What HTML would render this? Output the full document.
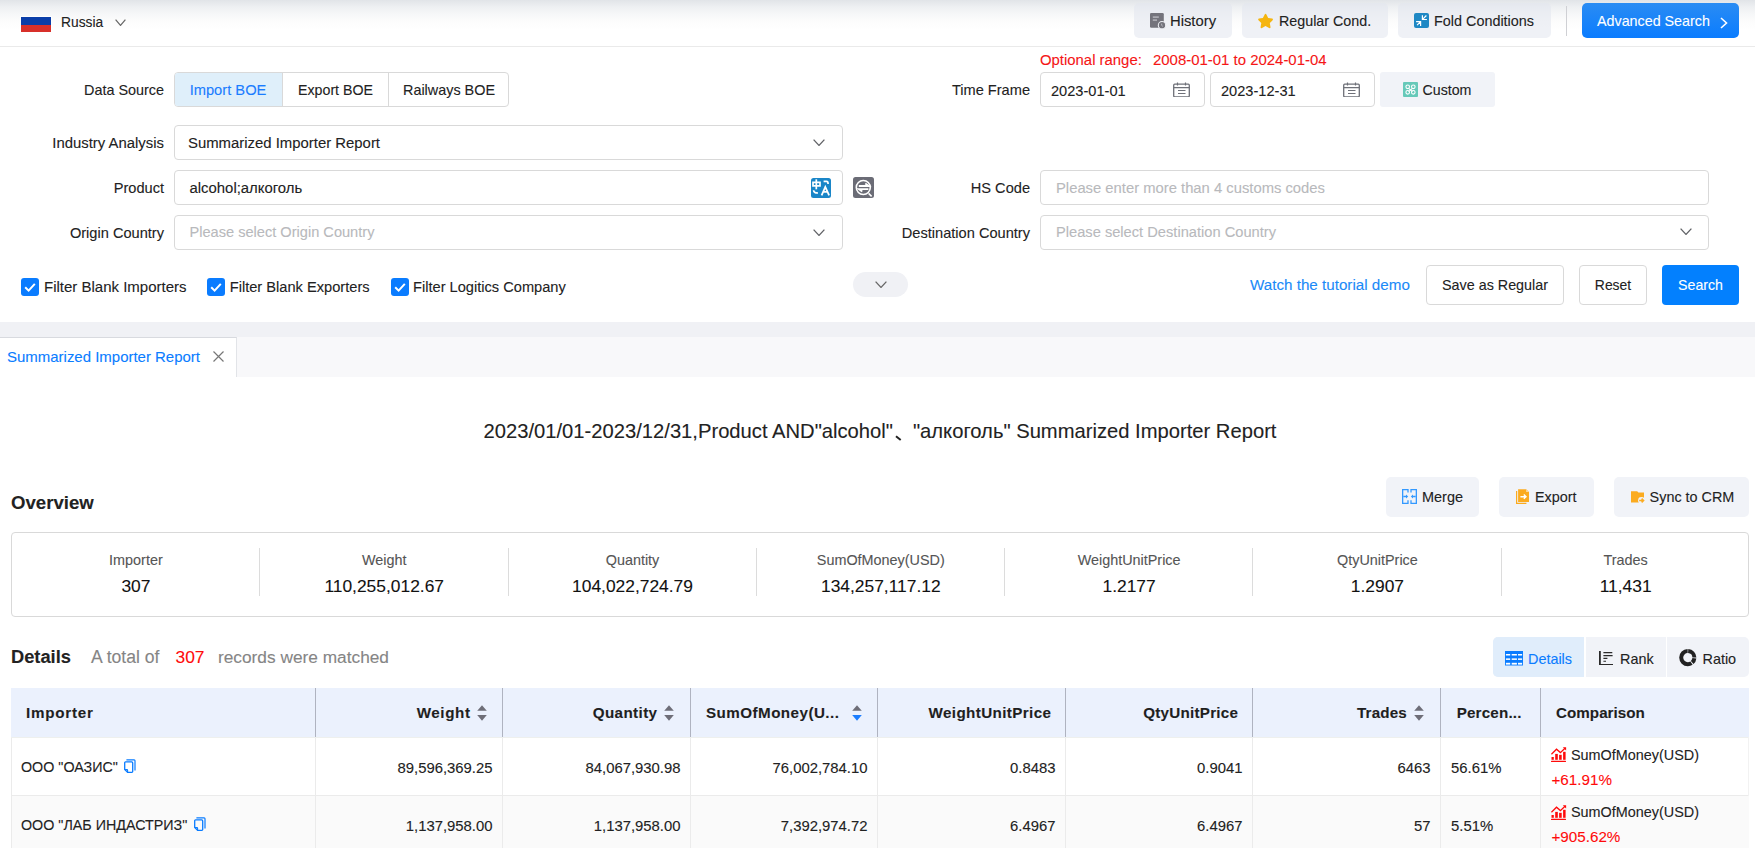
<!DOCTYPE html>
<html><head><meta charset="utf-8"><title>Report</title>
<style>
html,body{margin:0;padding:0;}
body{width:1755px;height:848px;position:relative;overflow:hidden;background:#fff;font-family:"Liberation Sans",sans-serif;}
.t{position:absolute;white-space:nowrap;line-height:1;-webkit-text-stroke:0.1px currentColor;}
.b{position:absolute;display:block;}
.dun{display:inline-block;width:20px;height:0;position:relative;}
.dun:after{content:"";position:absolute;left:2.5px;top:-0.8px;width:5.6px;height:1.5px;background:#222;transform:rotate(38deg);}
</style></head><body>
<div class="b" style="left:0px;top:0px;width:1755px;height:46px;background:linear-gradient(#e1e4e8 0px,#eef0f2 7px,#f6f7f8 14px,#fcfcfc 21px,#fff 30px);"></div>
<div class="b" style="left:0px;top:46px;width:1755px;height:1px;background:#eaeaea;"></div>
<div class="b" style="left:20px;top:16px;width:32px;height:17px;background:rgba(255,255,255,0.8);"></div>
<div class="b" style="left:21px;top:17px;width:30px;height:7.5px;background:#0a3ea8;"></div>
<div class="b" style="left:21px;top:24.5px;width:30px;height:7.5px;background:#d8302a;"></div>
<div class="t" style="top:16.32px;font-size:13.8px;color:#222;left:61px;">Russia</div>
<svg class="b" style="left:115px;top:19px" width="11" height="7" viewBox="0 0 11 7"><polyline points="0.6,0.6 5.5,6.4 10.4,0.6" fill="none" stroke="#666" stroke-width="1.2"/></svg>
<div class="b" style="left:1134px;top:3px;width:98px;height:35px;background:rgba(225,229,238,0.55);border-radius:5px;"></div>
<div class="b" style="left:1242px;top:3px;width:146px;height:35px;background:rgba(225,229,238,0.55);border-radius:5px;"></div>
<div class="b" style="left:1398px;top:3px;width:153px;height:35px;background:rgba(225,229,238,0.55);border-radius:5px;"></div>
<div class="b" style="left:1566px;top:6px;width:1px;height:30px;background:#cfd0d4;"></div>
<div class="b" style="left:1582px;top:3px;width:157px;height:35px;background:linear-gradient(#2a8cf3,#0a7cff);border-radius:5px;"></div>
<svg class="b" style="left:1150px;top:13px" width="16" height="16" viewBox="0 0 16 16"><rect x="0" y="0" width="13.8" height="14.8" rx="1.3" fill="#74747c"/><rect x="2.8" y="3.4" width="6" height="1.4" fill="#b8b8c0"/><rect x="2.8" y="6.4" width="4.2" height="1.4" fill="#b8b8c0"/><circle cx="12" cy="12.2" r="3.7" fill="#74747c" stroke="#eceef3" stroke-width="1.1"/><path d="M11.7 10.6v1.8l1.2 1" stroke="#c8c8d0" stroke-width="0.8" fill="none"/></svg>
<div class="t" style="top:14.47px;font-size:14.8px;color:#222;left:1170px;">History</div>
<svg class="b" style="left:1258px;top:12.5px" width="16" height="16" viewBox="0 0 16 16"><path d="M7.5 0.8c.4 0 .7.2.9.6l1.8 3.6 3.9.6c.8.1 1.1 1.1.5 1.7l-2.8 2.8.7 3.9c.1.8-.7 1.4-1.4 1l-3.6-1.9-3.5 1.9c-.7.4-1.5-.2-1.4-1l.7-3.9L.5 7.3c-.6-.6-.3-1.6.5-1.7l3.9-.6 1.8-3.6c.2-.4.5-.6.8-.6z" fill="#f5b50f"/></svg>
<div class="t" style="top:13.90px;font-size:14.3px;color:#222;left:1279px;">Regular Cond.</div>
<svg class="b" style="left:1414px;top:13px" width="15" height="15" viewBox="0 0 15 15"><rect width="15" height="15" rx="2" fill="#1f88c4"/><path d="M8.4 2.2v4.3h4.5M9 5.9l3.4-3.4M2.1 8.6h4.5v4.4M6.1 9.1l-3 3" fill="none" stroke="#fff" stroke-width="1.2"/></svg>
<div class="t" style="top:13.81px;font-size:14.4px;color:#222;left:1434px;">Fold Conditions</div>
<div class="t" style="top:13.90px;font-size:14.3px;color:#fff;left:1597px;">Advanced Search</div>
<svg class="b" style="left:1719.5px;top:16.5px" width="8" height="12" viewBox="0 0 8 12"><polyline points="1,1 6.5,6 1,11" fill="none" stroke="#fff" stroke-width="1.6"/></svg>
<div class="t" style="top:82.81px;font-size:14.4px;color:#222;right:1591px;">Data Source</div>
<div class="b" style="left:174px;top:72px;width:335px;height:35px;border:1px solid #d9d9d9;border-radius:4px;box-sizing:border-box;background:#fff;"></div>
<div class="b" style="left:175px;top:73px;width:107px;height:33px;background:#dfeffa;border-radius:3px 0 0 3px;"></div>
<div class="b" style="left:282px;top:72px;width:1px;height:35px;background:#d9d9d9;"></div>
<div class="b" style="left:388px;top:72px;width:1px;height:35px;background:#d9d9d9;"></div>
<div class="t" style="top:82.56px;font-size:14.7px;color:#1a7dff;left:228px;transform:translateX(-50%);">Import BOE</div>
<div class="t" style="top:82.98px;font-size:14.2px;color:#222;left:335.5px;transform:translateX(-50%);">Export BOE</div>
<div class="t" style="top:82.81px;font-size:14.4px;color:#222;left:449px;transform:translateX(-50%);">Railways BOE</div>
<div class="t" style="top:82.64px;font-size:14.6px;color:#222;right:725px;">Time Frame</div>
<div class="t" style="top:52.89px;font-size:14.9px;color:#f51616;left:1040px;">Optional range:</div>
<div class="t" style="top:52.84px;font-size:14.95px;color:#f51616;left:1153px;">2008-01-01 to 2024-01-04</div>
<div class="b" style="left:1040px;top:72px;width:165px;height:35px;border:1px solid #d9d9d9;border-radius:4px;box-sizing:border-box;background:#fff;"></div>
<div class="b" style="left:1210px;top:72px;width:165px;height:35px;border:1px solid #d9d9d9;border-radius:4px;box-sizing:border-box;background:#fff;"></div>
<div class="t" style="top:84.14px;font-size:14.6px;color:#222;left:1051px;">2023-01-01</div>
<div class="t" style="top:84.14px;font-size:14.6px;color:#222;left:1221px;">2023-12-31</div>
<svg class="b" style="left:1173px;top:82px" width="17" height="15" viewBox="0 0 17 15"><rect x="0.7" y="2.2" width="15.6" height="12.6" rx="1" fill="none" stroke="#6e7078" stroke-width="1.3"/><path d="M0.7 5.6h15.6M4.5 0.5v3M12.5 0.5v3M5 8.5h7.5M5 11.5h7.5" stroke="#6e7078" stroke-width="1.2"/></svg>
<svg class="b" style="left:1343px;top:82px" width="17" height="15" viewBox="0 0 17 15"><rect x="0.7" y="2.2" width="15.6" height="12.6" rx="1" fill="none" stroke="#6e7078" stroke-width="1.3"/><path d="M0.7 5.6h15.6M4.5 0.5v3M12.5 0.5v3M5 8.5h7.5M5 11.5h7.5" stroke="#6e7078" stroke-width="1.2"/></svg>
<div class="b" style="left:1380px;top:72px;width:115px;height:35px;background:#f1f3f8;border-radius:3px;"></div>
<svg class="b" style="left:1403px;top:82px" width="15" height="15" viewBox="0 0 15 15"><rect width="15" height="15" rx="1" fill="#66c9b9"/><g fill="none" stroke="#fff" stroke-width="1.1"><circle cx="4.7" cy="4.8" r="1.8"/><circle cx="10.3" cy="4.8" r="1.8"/><circle cx="4.7" cy="10.3" r="1.8"/><circle cx="10.3" cy="10.3" r="1.8"/><path d="M5.6 6.3l3.8 3.3M9.4 6.3l-3.8 3.3"/></g></svg>
<div class="t" style="top:83.48px;font-size:14.2px;color:#222;left:1422.5px;">Custom</div>
<div class="t" style="top:135.69px;font-size:14.9px;color:#222;right:1591px;">Industry Analysis</div>
<div class="b" style="left:174px;top:125px;width:669px;height:35px;border:1px solid #d9d9d9;border-radius:4px;box-sizing:border-box;background:#fff;"></div>
<div class="t" style="top:135.69px;font-size:14.9px;color:#222;left:188px;">Summarized Importer Report</div>
<svg class="b" style="left:812.5px;top:139px" width="12" height="7" viewBox="0 0 12 7"><polyline points="0.6,0.6 6.0,6.4 11.4,0.6" fill="none" stroke="#606266" stroke-width="1.3"/></svg>
<div class="t" style="top:180.84px;font-size:14.6px;color:#222;right:1591px;">Product</div>
<div class="b" style="left:174px;top:170px;width:669px;height:35px;border:1px solid #d9d9d9;border-radius:4px;box-sizing:border-box;background:#fff;"></div>
<div class="t" style="top:180.59px;font-size:14.9px;color:#222;left:189.5px;">alcohol;алкоголь</div>
<svg class="b" style="left:811px;top:177.5px" width="20" height="20" viewBox="0 0 20 20"><rect width="20" height="20" rx="2.5" fill="#1a86c8"/><path d="M2 4.3h7v3.6H2z" fill="none" stroke="#fff" stroke-width="1.7"/><path d="M5.3 1.3v10" stroke="#fff" stroke-width="1.7"/><path d="M2.6 12.2c0 2 1.2 2.8 4.4 2.8" fill="none" stroke="#fff" stroke-width="1.7"/><path d="M12.6 3.4h3c1 0 1.5 .6 1.5 2.6" fill="none" stroke="#fff" stroke-width="1.7"/><path d="M10.6 17.3L14.3 9l3.8 8.3M12.2 13.8h4.2" fill="none" stroke="#fff" stroke-width="1.8"/></svg>
<svg class="b" style="left:853px;top:177px" width="21" height="21" viewBox="0 0 21 21"><rect width="21" height="21" rx="2.5" fill="#6b6c76"/><circle cx="10.3" cy="10.5" r="7" fill="none" stroke="#fff" stroke-width="1.6"/><path d="M15.6 16.4l3 2.9" stroke="#fff" stroke-width="1.6"/><path d="M5.8 9h10L12.3 6.6" fill="none" stroke="#fff" stroke-width="1.8"/><path d="M15.4 12.1H5.8l3.5 2.5" fill="none" stroke="#fff" stroke-width="1.8"/></svg>
<div class="t" style="top:225.74px;font-size:14.6px;color:#222;right:1591px;">Origin Country</div>
<div class="b" style="left:174px;top:215px;width:669px;height:35px;border:1px solid #d9d9d9;border-radius:4px;box-sizing:border-box;background:#fff;"></div>
<div class="t" style="top:224.74px;font-size:14.6px;color:#b8b9bc;left:189.5px;">Please select Origin Country</div>
<svg class="b" style="left:813px;top:229px" width="12" height="7" viewBox="0 0 12 7"><polyline points="0.6,0.6 6.0,6.4 11.4,0.6" fill="none" stroke="#606266" stroke-width="1.3"/></svg>
<div class="t" style="top:180.64px;font-size:14.6px;color:#222;right:725px;">HS Code</div>
<div class="b" style="left:1040px;top:170px;width:669px;height:35px;border:1px solid #d9d9d9;border-radius:4px;box-sizing:border-box;background:#fff;"></div>
<div class="t" style="top:180.97px;font-size:14.8px;color:#b8b9bc;left:1056px;">Please enter more than 4 customs codes</div>
<div class="t" style="top:225.64px;font-size:14.6px;color:#222;right:725px;">Destination Country</div>
<div class="b" style="left:1040px;top:215px;width:669px;height:35px;border:1px solid #d9d9d9;border-radius:4px;box-sizing:border-box;background:#fff;"></div>
<div class="t" style="top:224.69px;font-size:14.66px;color:#b8b9bc;left:1056px;">Please select Destination Country</div>
<svg class="b" style="left:1680px;top:228px" width="12" height="7" viewBox="0 0 12 7"><polyline points="0.6,0.6 6.0,6.4 11.4,0.6" fill="none" stroke="#606266" stroke-width="1.3"/></svg>
<svg class="b" style="left:21px;top:278px" width="18" height="18" viewBox="0 0 18 18"><rect width="18" height="18" rx="3" fill="#0a7cff"/><polyline points="4.2,9.3 7.6,12.6 13.8,5.8" fill="none" stroke="#fff" stroke-width="2"/></svg>
<div class="t" style="top:279.00px;font-size:15.0px;color:#222;left:44px;">Filter Blank Importers</div>
<svg class="b" style="left:207px;top:278px" width="18" height="18" viewBox="0 0 18 18"><rect width="18" height="18" rx="3" fill="#0a7cff"/><polyline points="4.2,9.3 7.6,12.6 13.8,5.8" fill="none" stroke="#fff" stroke-width="2"/></svg>
<div class="t" style="top:280.00px;font-size:14.65px;color:#222;left:229.7px;">Filter Blank Exporters</div>
<svg class="b" style="left:391px;top:278px" width="18" height="18" viewBox="0 0 18 18"><rect width="18" height="18" rx="3" fill="#0a7cff"/><polyline points="4.2,9.3 7.6,12.6 13.8,5.8" fill="none" stroke="#fff" stroke-width="2"/></svg>
<div class="t" style="top:280.01px;font-size:14.64px;color:#222;left:413px;">Filter Logitics Company</div>
<div class="b" style="left:853px;top:272px;width:55px;height:25px;background:#f0f1f5;border-radius:13px;"></div>
<svg class="b" style="left:874.5px;top:281px" width="12" height="7" viewBox="0 0 12 7"><polyline points="0.6,0.6 6.0,6.4 11.4,0.6" fill="none" stroke="#666" stroke-width="1.3"/></svg>
<div class="t" style="top:276.63px;font-size:15.2px;color:#1b8af8;left:1250px;">Watch the tutorial demo</div>
<div class="b" style="left:1426px;top:265px;width:138px;height:40px;border:1px solid #d9d9d9;border-radius:4px;box-sizing:border-box;background:#fff;"></div>
<div class="t" style="top:278.36px;font-size:14.34px;color:#222;left:1495px;transform:translateX(-50%);">Save as Regular</div>
<div class="b" style="left:1579px;top:265px;width:68px;height:40px;border:1px solid #d9d9d9;border-radius:4px;box-sizing:border-box;background:#fff;"></div>
<div class="t" style="top:278.73px;font-size:13.9px;color:#222;left:1613px;transform:translateX(-50%);">Reset</div>
<div class="b" style="left:1662px;top:265px;width:77px;height:40px;background:#0380fe;border-radius:4px;"></div>
<div class="t" style="top:278.28px;font-size:14.2px;color:#fff;left:1700.5px;transform:translateX(-50%);">Search</div>
<div class="b" style="left:0px;top:322px;width:1755px;height:15px;background:#f0f1f5;"></div>
<div class="b" style="left:0px;top:337px;width:1755px;height:40px;background:#f8f8fa;"></div>
<div class="b" style="left:0px;top:337px;width:237px;height:40px;background:#fff;border-top:1px solid #d8dadf;border-right:1px solid #e2e4e8;box-sizing:border-box;"></div>
<div class="t" style="top:350.33px;font-size:14.97px;color:#0a7dff;left:7px;">Summarized Importer Report</div>
<svg class="b" style="left:213px;top:351px" width="11" height="11" viewBox="0 0 11 11"><path d="M0.5 0.5l10 10M10.5 0.5l-10 10" stroke="#777" stroke-width="1.2"/></svg>
<div class="t" style="top:420.90px;font-size:20.2px;color:#222;left:880px;transform:translateX(-50%);">2023/01/01-2023/12/31,Product AND"alcohol"<span class="dun"></span>"алкоголь" Summarized Importer Report</div>
<div class="t" style="top:494.26px;font-size:18.6px;color:#222;font-weight:700;left:11px;">Overview</div>
<div class="b" style="left:1386px;top:477px;width:93px;height:40px;background:#f1f3f8;border-radius:5px;"></div>
<div class="b" style="left:1499px;top:477px;width:95px;height:40px;background:#f1f3f8;border-radius:5px;"></div>
<div class="b" style="left:1614px;top:477px;width:135px;height:40px;background:#f1f3f8;border-radius:5px;"></div>
<svg class="b" style="left:1402px;top:489px" width="15" height="15" viewBox="0 0 15 15"><g fill="none" stroke="#3399ff" stroke-width="1.3"><path d="M6 3.6V0.65H0.65v13.7H6v-3.2"/><path d="M9 3.6V0.65h5.35v13.7H9v-3.2"/><path d="M1.3 7.5h3.6M13.7 7.5h-3.6"/></g><path d="M6.2 7.5L4 5.6v3.8z M8.8 7.5L11 5.6v3.8z" fill="#3399ff"/></svg>
<div class="t" style="top:489.95px;font-size:14.47px;color:#222;left:1422px;">Merge</div>
<svg class="b" style="left:1516px;top:489px" width="14" height="15" viewBox="0 0 14 15"><path d="M0 2h1.2v11.8h9.2V15H0z" fill="#fbab20"/><path d="M2.1 0.2h8l2.9 2.9V13H2.1z" fill="#fbab20"/><path d="M10.1 0.2v2.9h2.9" fill="#fdd9a0"/><path d="M4.4 7.7h5.3M7.8 5.6l2.2 2.1-2.2 2.1" fill="none" stroke="#fff" stroke-width="1.4"/></svg>
<div class="t" style="top:490.01px;font-size:14.4px;color:#222;left:1535px;">Export</div>
<svg class="b" style="left:1631px;top:490.5px" width="14" height="12" viewBox="0 0 14 12"><path d="M0 0.3h6.2l1.2 1.3H13v9.8H0z" fill="#fbab20"/><circle cx="10.5" cy="9.4" r="3.4" fill="#f1f3f8"/><path d="M8.2 9.5h3.8M10.6 7.6l2 1.9-2 1.9" fill="none" stroke="#fbab20" stroke-width="1.5"/></svg>
<div class="t" style="top:490.01px;font-size:14.4px;color:#222;left:1649.6px;">Sync to CRM</div>
<div class="b" style="left:11px;top:532px;width:1738px;height:85px;border:1px solid #d9d9d9;border-radius:4px;box-sizing:border-box;background:#fff;"></div>
<div class="t" style="top:553.11px;font-size:14.4px;color:#555;left:135.9px;transform:translateX(-50%);">Importer</div>
<div class="t" style="top:578.27px;font-size:17.4px;color:#111;left:135.9px;transform:translateX(-50%);">307</div>
<div class="t" style="top:553.11px;font-size:14.4px;color:#555;left:384.2px;transform:translateX(-50%);">Weight</div>
<div class="t" style="top:578.27px;font-size:17.4px;color:#111;left:384.2px;transform:translateX(-50%);">110,255,012.67</div>
<div class="b" style="left:259.3px;top:548px;width:1.0px;height:48px;background:#dcdcdc;"></div>
<div class="t" style="top:553.11px;font-size:14.4px;color:#555;left:632.5px;transform:translateX(-50%);">Quantity</div>
<div class="t" style="top:578.27px;font-size:17.4px;color:#111;left:632.5px;transform:translateX(-50%);">104,022,724.79</div>
<div class="b" style="left:507.6px;top:548px;width:1.0px;height:48px;background:#dcdcdc;"></div>
<div class="t" style="top:553.11px;font-size:14.4px;color:#555;left:880.8px;transform:translateX(-50%);">SumOfMoney(USD)</div>
<div class="t" style="top:578.27px;font-size:17.4px;color:#111;left:880.8px;transform:translateX(-50%);">134,257,117.12</div>
<div class="b" style="left:755.9px;top:548px;width:1.0px;height:48px;background:#dcdcdc;"></div>
<div class="t" style="top:553.11px;font-size:14.4px;color:#555;left:1129.1px;transform:translateX(-50%);">WeightUnitPrice</div>
<div class="t" style="top:578.27px;font-size:17.4px;color:#111;left:1129.1px;transform:translateX(-50%);">1.2177</div>
<div class="b" style="left:1004.1px;top:548px;width:1.0px;height:48px;background:#dcdcdc;"></div>
<div class="t" style="top:553.11px;font-size:14.4px;color:#555;left:1377.4px;transform:translateX(-50%);">QtyUnitPrice</div>
<div class="t" style="top:578.27px;font-size:17.4px;color:#111;left:1377.4px;transform:translateX(-50%);">1.2907</div>
<div class="b" style="left:1252.4px;top:548px;width:1.0px;height:48px;background:#dcdcdc;"></div>
<div class="t" style="top:553.11px;font-size:14.4px;color:#555;left:1625.7px;transform:translateX(-50%);">Trades</div>
<div class="t" style="top:578.27px;font-size:17.4px;color:#111;left:1625.7px;transform:translateX(-50%);">11,431</div>
<div class="b" style="left:1500.7px;top:548px;width:1.0px;height:48px;background:#dcdcdc;"></div>
<div class="t" style="top:647.51px;font-size:18.3px;color:#222;font-weight:700;left:11px;">Details</div>
<div class="t" style="top:649.10px;font-size:17.6px;color:#858585;left:91px;">A total of</div>
<div class="t" style="top:649.27px;font-size:17.4px;color:#ff0a0a;left:175.5px;">307</div>
<div class="t" style="top:649.36px;font-size:17.3px;color:#858585;left:218px;">records were matched</div>
<div class="b" style="left:1493px;top:637px;width:256px;height:40px;background:#f1f3f8;border-radius:5px;"></div>
<div class="b" style="left:1493px;top:637px;width:91px;height:40px;background:#e0edfb;border-radius:5px 0 0 5px;"></div>
<div class="b" style="left:1584px;top:637px;width:2px;height:40px;background:#fff;"></div>
<div class="b" style="left:1666px;top:637px;width:1px;height:40px;background:#fff;"></div>
<svg class="b" style="left:1505px;top:650.5px" width="18" height="15" viewBox="0 0 18 15"><rect x="0" y="0" width="18" height="14.5" fill="#0a7cff"/><g fill="#fff"><rect x="0.9" y="3" width="4.3" height="1.5"/><rect x="6.7" y="3" width="5.2" height="1.5"/><rect x="13" y="3" width="4.1" height="1.5"/><rect x="0.9" y="7.4" width="4.3" height="1.5"/><rect x="6.7" y="7.4" width="5.2" height="1.5"/><rect x="13" y="7.4" width="4.1" height="1.5"/><rect x="0.9" y="11.8" width="4.3" height="1.8"/><rect x="6.7" y="11.8" width="5.2" height="1.8"/><rect x="13" y="11.8" width="4.1" height="1.8"/></g></svg>
<div class="t" style="top:651.81px;font-size:14.4px;color:#0a7cff;left:1528px;">Details</div>
<svg class="b" style="left:1599px;top:651px" width="15" height="14" viewBox="0 0 15 14"><path d="M0.9 0v13.8H14" stroke="#2a2a2a" stroke-width="1.8" fill="none"/><path d="M4.4 1.6h8.9M4.4 4.6h9.2M4.4 7.4h4M4.4 10.2h2.6" stroke="#2a2a2a" stroke-width="1.1"/></svg>
<div class="t" style="top:651.81px;font-size:14.4px;color:#222;left:1620px;">Rank</div>
<svg class="b" style="left:1679px;top:649px" width="18" height="18" viewBox="0 0 18 18"><circle cx="8.8" cy="8.6" r="6.6" fill="none" stroke="#222" stroke-width="4" stroke-dasharray="9.8 0.8 4.8 0.9 24.37 0.8" stroke-dashoffset="-0.4" transform="rotate(-90 8.8 8.6)"/></svg>
<div class="t" style="top:651.81px;font-size:14.4px;color:#222;left:1702.5px;">Ratio</div>
<div class="b" style="left:11px;top:688px;width:1738px;height:49px;background:#ebf1fd;"></div>
<div class="b" style="left:315px;top:688px;width:1px;height:49px;background:#afb3c0;"></div>
<div class="b" style="left:315px;top:737px;width:1px;height:111px;background:#ebebeb;"></div>
<div class="b" style="left:502px;top:688px;width:1px;height:49px;background:#afb3c0;"></div>
<div class="b" style="left:502px;top:737px;width:1px;height:111px;background:#ebebeb;"></div>
<div class="b" style="left:690px;top:688px;width:1px;height:49px;background:#afb3c0;"></div>
<div class="b" style="left:690px;top:737px;width:1px;height:111px;background:#ebebeb;"></div>
<div class="b" style="left:877px;top:688px;width:1px;height:49px;background:#afb3c0;"></div>
<div class="b" style="left:877px;top:737px;width:1px;height:111px;background:#ebebeb;"></div>
<div class="b" style="left:1065px;top:688px;width:1px;height:49px;background:#afb3c0;"></div>
<div class="b" style="left:1065px;top:737px;width:1px;height:111px;background:#ebebeb;"></div>
<div class="b" style="left:1252px;top:688px;width:1px;height:49px;background:#afb3c0;"></div>
<div class="b" style="left:1252px;top:737px;width:1px;height:111px;background:#ebebeb;"></div>
<div class="b" style="left:1440px;top:688px;width:1px;height:49px;background:#afb3c0;"></div>
<div class="b" style="left:1440px;top:737px;width:1px;height:111px;background:#ebebeb;"></div>
<div class="b" style="left:1540px;top:688px;width:1px;height:49px;background:#afb3c0;"></div>
<div class="b" style="left:1540px;top:737px;width:1px;height:111px;background:#ebebeb;"></div>
<div class="b" style="left:11px;top:737px;width:1px;height:111px;background:#ebebeb;"></div>
<div class="b" style="left:11px;top:795px;width:1738px;height:1px;background:#ebebeb;"></div>
<div class="b" style="left:11px;top:737px;width:1738px;height:1px;background:#eef0ee;"></div>
<div class="b" style="left:1748px;top:737px;width:1px;height:111px;background:#f2f2f2;"></div>
<div class="b" style="left:12px;top:796px;width:1737px;height:52px;background:#fafafa;"></div>
<div class="b" style="left:315px;top:796px;width:1px;height:52px;background:#ebebeb;"></div>
<div class="b" style="left:502px;top:796px;width:1px;height:52px;background:#ebebeb;"></div>
<div class="b" style="left:690px;top:796px;width:1px;height:52px;background:#ebebeb;"></div>
<div class="b" style="left:877px;top:796px;width:1px;height:52px;background:#ebebeb;"></div>
<div class="b" style="left:1065px;top:796px;width:1px;height:52px;background:#ebebeb;"></div>
<div class="b" style="left:1252px;top:796px;width:1px;height:52px;background:#ebebeb;"></div>
<div class="b" style="left:1440px;top:796px;width:1px;height:52px;background:#ebebeb;"></div>
<div class="b" style="left:1540px;top:796px;width:1px;height:52px;background:#ebebeb;"></div>
<div class="t" style="top:705.13px;font-size:15.2px;color:#1f1f1f;font-weight:700;letter-spacing:0.75px;left:26px;">Importer</div>
<div class="t" style="top:705.13px;font-size:15.2px;color:#1f1f1f;font-weight:700;letter-spacing:0.6px;right:1284.4px;">Weight</div>
<svg class="b" style="left:477px;top:705px" width="10" height="16" viewBox="0 0 10 16"><path d="M5 0.2L9.8 5.8H0.2z" fill="#6e6e78"/><path d="M5 15.8L9.8 10.1H0.2z" fill="#6e6e78"/></svg>
<div class="t" style="top:705.13px;font-size:15.2px;color:#1f1f1f;font-weight:700;letter-spacing:0.38px;right:1097.6px;">Quantity</div>
<svg class="b" style="left:664px;top:705px" width="10" height="16" viewBox="0 0 10 16"><path d="M5 0.2L9.8 5.8H0.2z" fill="#6e6e78"/><path d="M5 15.8L9.8 10.1H0.2z" fill="#6e6e78"/></svg>
<div class="t" style="top:705.13px;font-size:15.2px;color:#1f1f1f;font-weight:700;letter-spacing:0.45px;left:706px;">SumOfMoney(U...</div>
<svg class="b" style="left:852px;top:705px" width="10" height="16" viewBox="0 0 10 16"><path d="M5 0.2L9.8 5.8H0.2z" fill="#6e6e78"/><path d="M5 15.8L9.8 10.1H0.2z" fill="#1a7dff"/></svg>
<div class="t" style="top:705.13px;font-size:15.2px;color:#1f1f1f;font-weight:700;letter-spacing:0.39px;right:703.5999999999999px;">WeightUnitPrice</div>
<div class="t" style="top:705.13px;font-size:15.2px;color:#1f1f1f;font-weight:700;letter-spacing:0.25px;right:516.8px;">QtyUnitPrice</div>
<div class="t" style="top:705.13px;font-size:15.2px;color:#1f1f1f;font-weight:700;letter-spacing:0.17px;right:348px;">Trades</div>
<svg class="b" style="left:1414px;top:705px" width="10" height="16" viewBox="0 0 10 16"><path d="M5 0.2L9.8 5.8H0.2z" fill="#6e6e78"/><path d="M5 15.8L9.8 10.1H0.2z" fill="#6e6e78"/></svg>
<div class="t" style="top:705.13px;font-size:15.2px;color:#1f1f1f;font-weight:700;letter-spacing:0.18px;left:1456.7px;">Percen...</div>
<div class="t" style="top:705.13px;font-size:15.2px;color:#1f1f1f;font-weight:700;letter-spacing:0.03px;left:1556px;">Comparison</div>
<div class="t" style="top:759.90px;font-size:14.3px;color:#222;left:21px;">ООО "ОАЗИС"</div>
<svg class="b" style="left:124px;top:759px" width="12" height="15" viewBox="0 0 12 15"><path d="M1.5 2.9h6.2a1 1 0 0 1 1 1v8.6a.8.8 0 0 1-.8.8H3.6L0.7 10.5V3.7a.8.8 0 0 1 .8-.8z" fill="none" stroke="#0a7cff" stroke-width="1.3"/><path d="M0.8 10.5h2.1a.7.7 0 0 1 .7.7v2.3" fill="none" stroke="#0a7cff" stroke-width="1.1"/><path d="M2.4 0.9h7.7a.9.9 0 0 1 .9.9v9.6" fill="none" stroke="#0a7cff" stroke-width="1.2"/></svg>
<div class="t" style="top:761.42px;font-size:14.86px;color:#222;right:1262.5px;">89,596,369.25</div>
<div class="t" style="top:761.42px;font-size:14.86px;color:#222;right:1074.5px;">84,067,930.98</div>
<div class="t" style="top:761.42px;font-size:14.86px;color:#222;right:887.5px;">76,002,784.10</div>
<div class="t" style="top:761.42px;font-size:14.86px;color:#222;right:699.5px;">0.8483</div>
<div class="t" style="top:761.42px;font-size:14.86px;color:#222;right:512.5px;">0.9041</div>
<div class="t" style="top:761.42px;font-size:14.86px;color:#222;right:324.5px;">6463</div>
<div class="t" style="top:761.42px;font-size:14.86px;color:#222;left:1451px;">56.61%</div>
<svg class="b" style="left:1551px;top:746px" width="16" height="16" viewBox="0 0 16 16"><g fill="#ff0a0a"><rect x="0.5" y="11" width="2.3" height="2.8"/><rect x="4.2" y="7.9" width="2.6" height="5.9"/><rect x="8.1" y="8.8" width="2.6" height="5"/><rect x="12.1" y="5.8" width="2.5" height="8"/><rect x="0" y="14.7" width="15" height="1.2" rx="0.5"/><path d="M11.8 1.2h3.3v3.2z"/></g><path d="M0.4 8.2L5.5 3.2l3.9 3.4 4.6-4.4" fill="none" stroke="#ff0a0a" stroke-width="1.3"/></svg>
<div class="t" style="top:747.81px;font-size:14.4px;color:#222;left:1571px;">SumOfMoney(USD)</div>
<div class="t" style="top:771.63px;font-size:15.2px;color:#ff0a0a;left:1551.5px;">+61.91%</div>
<div class="t" style="top:818.40px;font-size:14.3px;color:#222;left:21px;">ООО "ЛАБ ИНДАСТРИЗ"</div>
<svg class="b" style="left:193.5px;top:816.5px" width="12" height="15" viewBox="0 0 12 15"><path d="M1.5 2.9h6.2a1 1 0 0 1 1 1v8.6a.8.8 0 0 1-.8.8H3.6L0.7 10.5V3.7a.8.8 0 0 1 .8-.8z" fill="none" stroke="#0a7cff" stroke-width="1.3"/><path d="M0.8 10.5h2.1a.7.7 0 0 1 .7.7v2.3" fill="none" stroke="#0a7cff" stroke-width="1.1"/><path d="M2.4 0.9h7.7a.9.9 0 0 1 .9.9v9.6" fill="none" stroke="#0a7cff" stroke-width="1.2"/></svg>
<div class="t" style="top:818.92px;font-size:14.86px;color:#222;right:1262.5px;">1,137,958.00</div>
<div class="t" style="top:818.92px;font-size:14.86px;color:#222;right:1074.5px;">1,137,958.00</div>
<div class="t" style="top:818.92px;font-size:14.86px;color:#222;right:887.5px;">7,392,974.72</div>
<div class="t" style="top:818.92px;font-size:14.86px;color:#222;right:699.5px;">6.4967</div>
<div class="t" style="top:818.92px;font-size:14.86px;color:#222;right:512.5px;">6.4967</div>
<div class="t" style="top:818.92px;font-size:14.86px;color:#222;right:324.5px;">57</div>
<div class="t" style="top:818.92px;font-size:14.86px;color:#222;left:1451px;">5.51%</div>
<svg class="b" style="left:1551px;top:803.5px" width="16" height="16" viewBox="0 0 16 16"><g fill="#ff0a0a"><rect x="0.5" y="11" width="2.3" height="2.8"/><rect x="4.2" y="7.9" width="2.6" height="5.9"/><rect x="8.1" y="8.8" width="2.6" height="5"/><rect x="12.1" y="5.8" width="2.5" height="8"/><rect x="0" y="14.7" width="15" height="1.2" rx="0.5"/><path d="M11.8 1.2h3.3v3.2z"/></g><path d="M0.4 8.2L5.5 3.2l3.9 3.4 4.6-4.4" fill="none" stroke="#ff0a0a" stroke-width="1.3"/></svg>
<div class="t" style="top:805.31px;font-size:14.4px;color:#222;left:1571px;">SumOfMoney(USD)</div>
<div class="t" style="top:829.13px;font-size:15.2px;color:#ff0a0a;left:1551.5px;">+905.62%</div>
</body></html>
